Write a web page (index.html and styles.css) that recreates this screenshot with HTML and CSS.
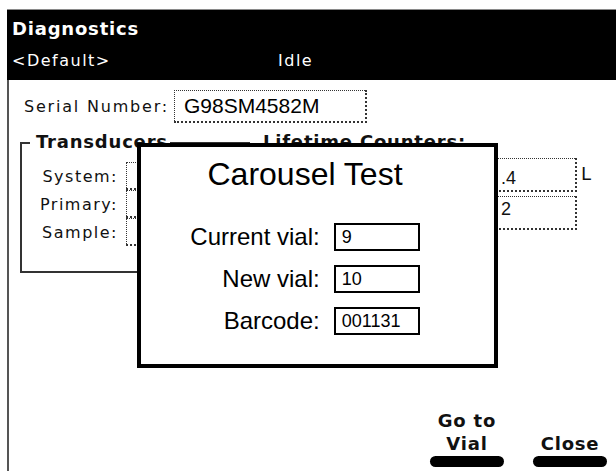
FILE: index.html
```html
<!DOCTYPE html>
<html lang="en">
  <head>
    <meta charset="UTF-8" />
    <meta name="viewport" content="width=device-width, initial-scale=1.0" />
    <title>Diagnostics</title>
    <link rel="stylesheet" href="styles.css">
  </head>
  <body>
    <div class="window">
      <header class="titlebar">
        <div class="title">Diagnostics</div>
        <div class="status">
          <span class="method">&lt;Default&gt;</span>
          <span>Idle</span>
        </div>
      </header>

      <main class="content">
        <div class="serial">
          <span class="label">Serial Number:</span>
          <span class="field serial-field">G98SM4582M</span>
        </div>

        <div class="groups">
          <fieldset class="transducers">
            <legend>Transducers</legend>
            <div class="row"><span class="row-label">System:</span><span class="field"></span></div>
            <div class="row"><span class="row-label">Primary:</span><span class="field"></span></div>
            <div class="row"><span class="row-label">Sample:</span><span class="field"></span></div>
          </fieldset>

          <section class="counters">
            <h3>Lifetime Counters:</h3>
            <div class="counter-row"><span class="field counter-field">.4</span><span class="unit">L</span></div>
            <div class="counter-row"><span class="field counter-field tight">2</span><span class="unit"></span></div>
          </section>
        </div>

        <div class="buttons">
          <button class="softkey" type="button"><span>Go to<br>Vial</span><span class="bar"></span></button>
          <button class="softkey" type="button"><span>Close</span><span class="bar"></span></button>
        </div>
      </main>
    </div>

    <!-- popup shown over the diagnostics screen -->
    <div class="dialog">
      <h2>Carousel Test</h2>
      <div class="dialog-grid">
        <label>Current vial:</label><span class="box">9</span>
        <label>New vial:</label><span class="box">10</span>
        <label>Barcode:</label><span class="box">001131</span>
      </div>
    </div>
  </body>
</html>
```

FILE: styles.css
```css
body {
  margin: 0;
  background: #fff;
  font-family: "DejaVu Sans", sans-serif;
  color: #111;
}
.window {
  margin: 9px 0 0 7px;
  border-top: 1px solid #8a8a8a;
}
.titlebar {
  background: #000;
  color: #fff;
  height: 70px;
  box-sizing: border-box;
  padding: 6px 0 0 5px;
}
.title {
  font-weight: bold;
  font-size: 18px;
  line-height: 26px;
  letter-spacing: 0.8px;
}
.status {
  display: flex;
  margin-top: 9px;
  font-size: 16px;
  line-height: 20px;
  letter-spacing: 1.5px;
}
.method {
  width: 266px;
}
.content {
  height: 391px;
  box-sizing: border-box;
  border-left: 2px solid #555;
  padding: 10px 9px 4px 11px;
  display: flex;
  flex-direction: column;
}
.field {
  display: block;
  box-sizing: border-box;
  border: 1px dotted #333;
  border-right-width: 2px;
  border-bottom-width: 2px;
}
.serial {
  display: flex;
  align-items: center;
  margin-left: 4px;
}
.label {
  font-size: 16px;
  letter-spacing: 1.8px;
  width: 150px;
}
.serial-field {
  width: 193px;
  height: 33px;
  padding-left: 9px;
  font-family: "Liberation Sans", Arial, sans-serif;
  font-size: 21px;
  line-height: 30px;
  color: #000;
}
.groups {
  display: flex;
  align-items: flex-start;
  margin-top: 8px;
}
.transducers {
  margin: 0;
  width: 230px;
  box-sizing: border-box;
  border: 2px solid #333;
  padding: 7px 0 25px 0;
}
.transducers legend,
.counters h3 {
  font-weight: bold;
  font-size: 18px;
  line-height: 22px;
  letter-spacing: 0.8px;
}
.transducers legend {
  margin-left: 8px;
  padding: 0 2px 2px 6px;
}
.row {
  display: flex;
  align-items: center;
  height: 28px;
}
.row-label {
  width: 96px;
  text-align: right;
  font-size: 16px;
  letter-spacing: 1.5px;
  margin-right: 8px;
}
.row .field {
  width: 110px;
  height: 28px;
}
.counters {
  margin-left: 13px;
  width: 337px;
}
.counters h3 {
  margin: 0;
}
.counter-row {
  display: flex;
  justify-content: flex-end;
  align-items: flex-start;
  margin-top: 4px;
}
.counters h3 + .counter-row {
  margin-top: 5px;
}
.counter-field {
  width: 107px;
  height: 34px;
  padding: 7px 0 0 30px;
  font-family: "Liberation Sans", Arial, sans-serif;
  font-size: 18px;
  line-height: 24px;
}
.counter-field.tight {
  padding-top: 0;
}
.unit {
  width: 19px;
  margin-left: 4px;
  padding-top: 4px;
  font-size: 18px;
  line-height: 24px;
}
.buttons {
  margin-top: auto;
  display: flex;
  justify-content: flex-end;
  align-items: flex-end;
  gap: 29px;
}
.softkey {
  width: 74px;
  padding: 0;
  border: none;
  background: none;
  display: flex;
  flex-direction: column;
  justify-content: flex-end;
  align-items: center;
  font-family: "DejaVu Sans", sans-serif;
  font-weight: bold;
  font-size: 18px;
  line-height: 23px;
  letter-spacing: 0.8px;
  color: #111;
  cursor: pointer;
}
.bar {
  display: block;
  align-self: stretch;
  height: 11px;
  margin-top: 1px;
  border-radius: 6px;
  background: #000;
}
.dialog {
  position: absolute;
  left: 137px;
  top: 143px;
  width: 361px;
  height: 225px;
  box-sizing: border-box;
  border: 4px solid #000;
  background: #fff;
  padding: 9px 25px 0 0;
  font-family: "Liberation Sans", Arial, sans-serif;
  color: #000;
}
.dialog h2 {
  margin: 0;
  font-weight: normal;
  font-size: 32px;
  line-height: 36px;
  text-align: center;
}
.dialog-grid {
  display: grid;
  grid-template-columns: auto 86px;
  justify-content: center;
  align-items: center;
  column-gap: 14px;
  row-gap: 14px;
  margin-top: 31px;
}
.dialog-grid label {
  text-align: right;
  font-size: 24px;
}
.box {
  height: 28px;
  box-sizing: border-box;
  border: 2px solid #000;
  padding-left: 6px;
  font-size: 18px;
  line-height: 24px;
}
```
